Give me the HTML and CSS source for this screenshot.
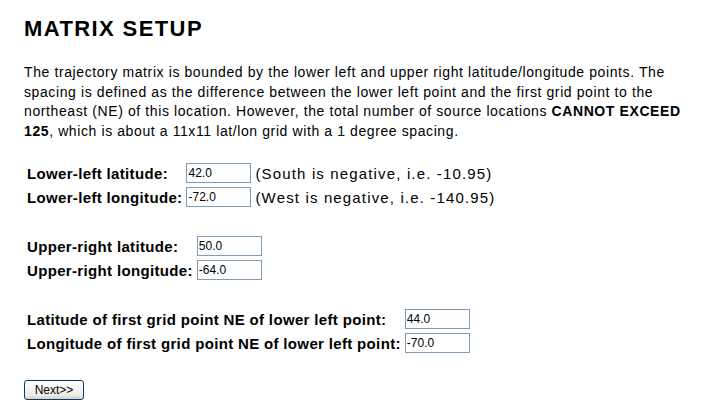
FILE: index.html
```html
<!DOCTYPE html>
<html lang="en">
<head>
  <meta charset="UTF-8">
  <title>Matrix Setup</title>
  <link rel="stylesheet" href="styles.css">
</head>
<body>
  <div class="page">
    <h1>MATRIX SETUP</h1>
    <p class="intro">The trajectory matrix is bounded by the lower left and upper right latitude/longitude points. The<br>
      spacing is defined as the difference between the lower left point and the first grid point to the<br>
      northeast (NE) of this location. However, the total number of source locations <b>CANNOT EXCEED<br>
      125</b>, which is about a 11x11 lat/lon grid with a 1 degree spacing.</p>

    <form>
      <table class="fields">
        <tr>
          <td class="label">Lower-left latitude:</td>
          <td><input type="text" value="42.0"></td>
          <td class="hint">(South is negative, i.e. -10.95)</td>
        </tr>
        <tr>
          <td class="label">Lower-left longitude:</td>
          <td><input type="text" value="-72.0"></td>
          <td class="hint">(West is negative, i.e. -140.95)</td>
        </tr>
      </table>

      <table class="fields">
        <tr>
          <td class="label">Upper-right latitude:</td>
          <td><input type="text" value="50.0"></td>
        </tr>
        <tr>
          <td class="label">Upper-right longitude:</td>
          <td><input type="text" value="-64.0"></td>
        </tr>
      </table>

      <table class="fields">
        <tr>
          <td class="label">Latitude of first grid point NE of lower left point:</td>
          <td><input type="text" value="44.0"></td>
        </tr>
        <tr>
          <td class="label">Longitude of first grid point NE of lower left point:</td>
          <td><input type="text" value="-70.0"></td>
        </tr>
      </table>

      <button type="button" class="next">Next&gt;&gt;</button>
    </form>
  </div>
</body>
</html>
```

FILE: styles.css
```css
body {
  margin: 0;
  background: #fff;
  color: #000;
  font-family: "Liberation Sans", Arial, sans-serif;
}
.page {
  padding: 0 24px;
}
h1 {
  margin: 16px 0 0;
  font-size: 22px;
  line-height: 25px;
  font-weight: bold;
  letter-spacing: 1.4px;
}
p.intro {
  margin: 22px 0 0;
  font-size: 14px;
  line-height: 19.5px;
  letter-spacing: 0.6px;
  white-space: nowrap;
}
table.fields {
  border-collapse: separate;
  border-spacing: 2px;
  margin-top: 19px;
}
table.fields + table.fields {
  margin-top: 23px;
}
table.fields td {
  padding: 1px;
  font-size: 15px;
  white-space: nowrap;
}
td.label {
  font-weight: bold;
  letter-spacing: 0.34px;
}
td.hint {
  padding-left: 6px;
  font-size: 16px;
  letter-spacing: 1.15px;
}
input[type="text"] {
  box-sizing: border-box;
  width: 65px;
  height: 20px;
  border: 1px solid #7f9db9;
  padding: 1px 1px;
  font-family: "Liberation Sans", Arial, sans-serif;
  font-size: 12px;
  display: block;
}
button.next {
  margin-top: 24px;
  width: 60px;
  height: 20px;
  border: 1px solid #003c74;
  border-radius: 3px;
  background: linear-gradient(#ffffff, #ecebe5 80%, #d6d0c5);
  font-family: "Liberation Sans", Arial, sans-serif;
  font-size: 12px;
  padding: 0;
  color: #000;
}
```
